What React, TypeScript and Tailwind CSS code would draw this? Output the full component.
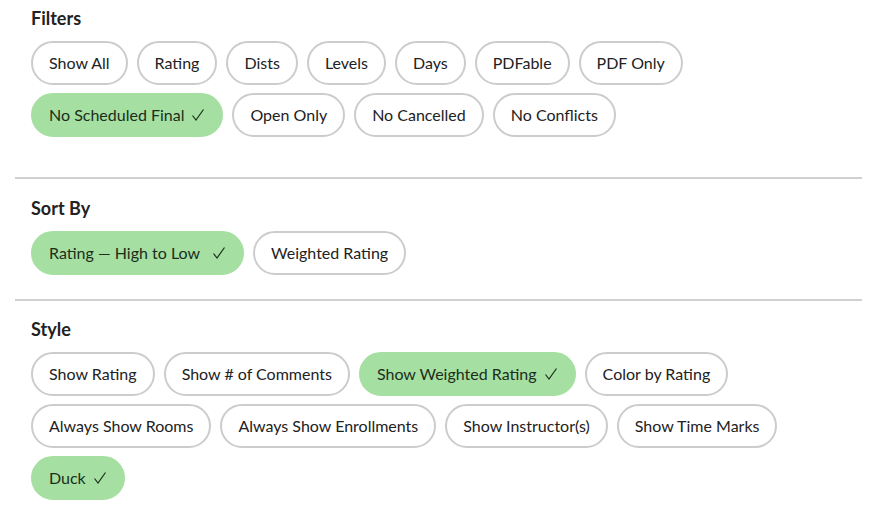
import React from "react";

type Opt = { label: string; on?: boolean; wide?: boolean };

const filters: Opt[] = [
  { label: "Show All" },
  { label: "Rating" },
  { label: "Dists" },
  { label: "Levels" },
  { label: "Days" },
  { label: "PDFable" },
  { label: "PDF Only" },
  { label: "No Scheduled Final", on: true },
  { label: "Open Only" },
  { label: "No Cancelled" },
  { label: "No Conflicts" },
];

const sorts: Opt[] = [
  { label: "Rating \u2014 High to Low", on: true, wide: true },
  { label: "Weighted Rating" },
];

const styles: Opt[] = [
  { label: "Show Rating" },
  { label: "Show # of Comments" },
  { label: "Show Weighted Rating", on: true },
  { label: "Color by Rating" },
  { label: "Always Show Rooms" },
  { label: "Always Show Enrollments" },
  { label: "Show Instructor(s)" },
  { label: "Show Time Marks" },
  { label: "Duck", on: true },
];

const Check = ({ wide }: { wide?: boolean }) => (
  <svg
    viewBox="0 0 14 14"
    className={wide ? "ml-[12px] h-[14px] w-[14px]" : "ml-[7px] h-[14px] w-[14px]"}
    fill="none"
    stroke="currentColor"
    strokeWidth="1.2"
  >
    <path d="M1.5 7.5 L5 12 L12.5 1.5" />
  </svg>
);

const Pill = ({ label, on, wide }: Opt) => (
  <button
    className={
      on
        ? "flex h-[44px] items-center rounded-full border-2 border-[#a6dfa2] bg-[#a6dfa2] px-4 text-[16px] leading-5 text-[#1b2e1b]"
        : "flex h-[44px] items-center rounded-full border-2 border-[#cccccc] bg-white px-4 text-[16px] leading-5 text-[#222]"
    }
  >
    {label}
    {on && <Check wide={wide} />}
  </button>
);

const Section = ({ title, items }: { title: string; items: Opt[] }) => (
  <div className="px-4">
    <h2 className="text-[18px] font-bold leading-[22px] text-[#222]">{title}</h2>
    <div className="mt-3 flex flex-wrap gap-x-[9px] gap-y-2">
      {items.map((o) => (
        <Pill key={o.label} {...o} />
      ))}
    </div>
  </div>
);

export default function App() {
  return (
    <div
      className="min-h-screen bg-white pl-[15px] pr-[14px] pt-[7px]"
      style={{ fontFamily: "Lato, 'Open Sans', sans-serif" }}
    >
      <Section title="Filters" items={filters} />
      <hr className="mt-[40px] border-t-2 border-[#d0d0d0]" />
      <div className="pt-[18px]">
        <Section title="Sort By" items={sorts} />
      </div>
      <hr className="mt-[24px] border-t-2 border-[#d0d0d0]" />
      <div className="pt-[17px]">
        <Section title="Style" items={styles} />
      </div>
    </div>
  );
}
